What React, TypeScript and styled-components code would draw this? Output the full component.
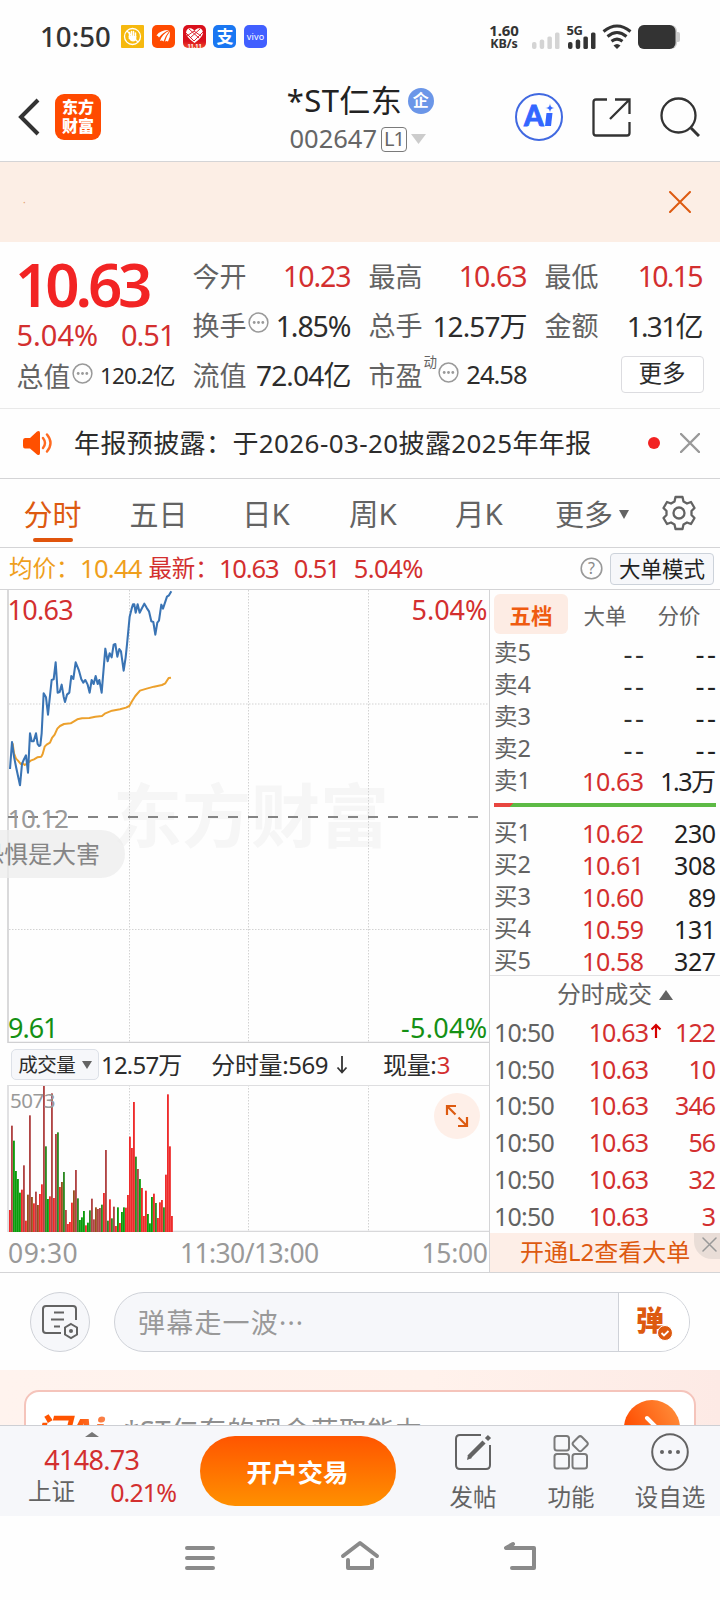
import React from "react";
import styled, { createGlobalStyle } from "styled-components";

const RED = "#d32f2f";
const ORANGE = "#dd5a10";
const GRAY = "#636363";
const LINE = "#d4d4d6";

const Global = createGlobalStyle`
  * { box-sizing: border-box; }
  body { margin: 0; background: #fefefe; }
  body, button, input { font-family: "Noto Sans", "Noto Sans CJK SC", sans-serif; }
`;

const Page = styled.div`
  width: 720px;
  height: 1600px;
  overflow: hidden;
  display: flex;
  flex-direction: column;
  color: #2c2c2c;
  background: #fefefe;
`;

const Text = styled.span<{ $size: number; $color?: string; $ls?: number; $weight?: number; $ml?: number }>`
  font-size: ${(p) => p.$size}px;
  line-height: 1;
  color: ${(p) => p.$color ?? "inherit"};
  letter-spacing: ${(p) => p.$ls ?? 0}px;
  margin-right: ${(p) => -(p.$ls ?? 0)}px;
  margin-left: ${(p) => p.$ml ?? 0}px;
  font-weight: ${(p) => p.$weight ?? 400};
  white-space: nowrap;
`;

/* ---------- status bar ---------- */
const StatusBar = styled.div`
  height: 73px;
  flex: none;
  display: flex;
  align-items: center;
  padding: 0 40px 0 40px;
`;
const AppIcons = styled.div`
  display: flex;
  gap: 7.7px;
  margin-left: 10.5px;
`;
const AppIcon = styled.div<{ $bg: string; $r?: number }>`
  width: 23px;
  height: 23px;
  border-radius: ${(p) => p.$r ?? 5}px;
  background: ${(p) => p.$bg};
  display: flex;
  align-items: center;
  justify-content: center;
  color: #fff;
`;
const StatusRight = styled.div`
  margin-left: auto;
  display: flex;
  align-items: center;
  svg { overflow: visible; }
`;
const Speed = styled.div`
  width: 34px;
  margin-right: 11px;
  font-weight: 700;
  font-size: 15px;
  letter-spacing: -0.1px;
  line-height: 14px;
  text-align: center;
  color: #333;
  white-space: nowrap;
  span { display: block; font-size: 12.5px; letter-spacing: -0.2px; }
`;

/* ---------- header ---------- */
const Header = styled.header`
  height: 89px;
  flex: none;
  display: flex;
  align-items: center;
  justify-content: space-between;
  border-bottom: 1px solid ${LINE};
  padding: 0 19.5px 0 17px;
`;
const HeaderSide = styled.div<{ $gap: number; $end?: boolean }>`
  width: 187px;
  display: flex;
  align-items: center;
  justify-content: ${(p) => (p.$end ? "flex-end" : "flex-start")};
  gap: ${(p) => p.$gap}px;
`;
const Logo = styled.div`
  width: 46px;
  height: 46px;
  border-radius: 9px;
  background: #ff4a00;
  color: #fff;
  font-weight: 900;
  font-size: 16px;
  line-height: 19px;
  display: flex;
  flex-direction: column;
  align-items: center;
  justify-content: center;
`;
const TitleBlock = styled.div`
  display: flex;
  flex-direction: column;
  align-items: center;
  padding: 1px 0 0 3px;
`;
const TitleLine = styled.div<{ $h: number; $gap: number; $pr?: number }>`
  height: ${(p) => p.$h}px;
  padding-right: ${(p) => p.$pr ?? 0}px;
  display: flex;
  align-items: center;
  gap: ${(p) => p.$gap}px;
`;
const CorpBadge = styled.div`
  width: 26px;
  height: 26px;
  border-radius: 50%;
  background: #6b96e8;
  color: #fff;
  font-size: 16px;
  font-weight: 700;
  line-height: 24px;
  text-align: center;
`;
const LevelBadge = styled.div`
  width: 26px;
  height: 25px;
  border: 1.5px solid #7a7a7a;
  border-radius: 4px;
  color: #666;
  font-size: 20px;
  letter-spacing: -1px;
  line-height: 22px;
  text-align: center;
`;

/* ---------- banner ---------- */
const Banner = styled.div`
  height: 80px;
  flex: none;
  background: #fceee5;
  display: flex;
  align-items: center;
  justify-content: space-between;
  padding: 0 29px 0 23px;
`;

/* ---------- quote ---------- */
const Quote = styled.section`
  height: 167px;
  flex: none;
  display: grid;
  grid-template-columns: repeat(4, 159px);
  column-gap: 17px;
  padding: 10px 16px 0 16.5px;
  border-bottom: 1px solid #e9e9e9;
`;
const QuoteCol = styled.div`
  display: flex;
  flex-direction: column;
`;
const QuoteRow = styled.div<{ $h?: number }>`
  height: ${(p) => p.$h ?? 49.3}px;
  display: flex;
  align-items: center;
  justify-content: space-between;
`;
const LabelGroup = styled.span`
  display: flex;
  align-items: center;
`;
const Sup = styled.span`
  font-size: 13.5px;
  line-height: 1;
  color: ${GRAY};
  margin: -24px 0 0 1px;
`;
const MoreButton = styled.button`
  width: 83px;
  height: 37px;
  margin: -1px 0 0 auto;
  padding: 0 0 1px;
  background: #fff;
  border: 1.5px solid #dcdce0;
  border-radius: 4px;
  font-size: 23.5px;
  line-height: 1;
  color: #2c2c2c;
`;

/* ---------- notice ---------- */
const Notice = styled.div`
  height: 70px;
  flex: none;
  display: flex;
  align-items: center;
  padding: 0 20px 2px 21px;
  border-bottom: 1px solid ${LINE};
`;
const NoticeText = styled.div`
  flex: 1;
  padding-left: 21px;
  display: flex;
`;
const RedDot = styled.i`
  width: 12px;
  height: 12px;
  border-radius: 50%;
  background: #f22222;
  margin-right: 20px;
`;

/* ---------- period tabs ---------- */
const Tabs = styled.nav`
  height: 69px;
  flex: none;
  display: grid;
  grid-template-columns: 105px 107px 108px 106px 106px 110px 74px;
  border-bottom: 1px solid ${LINE};
`;
const Tab = styled.div<{ $active?: boolean; $menu?: boolean }>`
  display: flex;
  flex-direction: column;
  align-items: center;
  padding: 20px 0 0 ${(p) => (p.$menu ? 10 : 0)}px;
  gap: 9px;
  color: ${(p) => (p.$active ? ORANGE : GRAY)};
  &::after {
    content: "";
    width: 40px;
    height: 4px;
    border-radius: 2px;
    background: ${(p) => (p.$active ? "#e0540c" : "transparent")};
  }
`;
const TabLabel = styled.div`
  height: 30px;
  display: flex;
  align-items: center;
  gap: 6px;
`;

/* ---------- average price row ---------- */
const AvgRow = styled.div`
  height: 42px;
  flex: none;
  display: flex;
  align-items: center;
  padding: 0 6px 0 9px;
  border-bottom: 1px solid ${LINE};
`;
const ModeButton = styled.button`
  width: 104px;
  height: 32px;
  margin-left: 7px;
  padding: 0;
  border: 1px solid #ccd2da;
  border-radius: 4px;
  background: #f6f7fa;
  font-size: 21.5px;
  line-height: 1;
  color: #222;
`;
const Spring = styled.span`
  flex: 1;
`;

/* ---------- main ---------- */
const Main = styled.main`
  height: 683px;
  flex: none;
  display: flex;
  border-bottom: 1px solid ${LINE};
`;
const ChartCol = styled.div`
  width: 490px;
  border-right: 1px solid ${LINE};
  display: flex;
  flex-direction: column;
`;
const ChartBox = styled.div<{ $h: number }>`
  position: relative;
  height: ${(p) => p.$h}px;
  flex: none;
  svg { display: block; }
`;
const FloatComment = styled.div`
  position: absolute;
  left: 0;
  top: 240px;
  width: 125px;
  height: 48px;
  border-radius: 0 24px 24px 0;
  background: rgba(236, 236, 236, 0.75);
  overflow: hidden;
  display: flex;
  align-items: center;
  justify-content: flex-end;
  padding-right: 25px;
`;
const ExpandButton = styled.div`
  position: absolute;
  right: 9px;
  top: 8px;
  width: 46px;
  height: 46px;
  border-radius: 50%;
  background: #feefe8;
  display: flex;
  align-items: center;
  justify-content: center;
`;
const InfoRow = styled.div`
  height: 42px;
  flex: none;
  display: flex;
  align-items: center;
  padding: 1px 0 0 11px;
`;
const Selector = styled.div`
  width: 88px;
  height: 31px;
  border: 1px solid #dde1e8;
  border-radius: 5px;
  background: #f6f7fa;
  display: flex;
  align-items: center;
  justify-content: center;
  gap: 6px;
`;
const Axis = styled.div`
  flex: 1;
  display: flex;
  align-items: center;
  justify-content: space-between;
  padding: 3px 1px 0 8px;
`;

/* ---------- order book ---------- */
const Book = styled.aside`
  flex: 1;
  display: flex;
  flex-direction: column;
`;
const BookTabs = styled.div`
  height: 47px;
  flex: none;
  padding: 4px 4px 3px 4px;
  display: grid;
  grid-template-columns: 74px 74px 74px;
`;
const BookTab = styled.div<{ $active?: boolean }>`
  border-radius: 6px;
  background: ${(p) => (p.$active ? "#fdece4" : "transparent")};
  color: ${(p) => (p.$active ? "#ef5b10" : GRAY)};
  font-weight: ${(p) => (p.$active ? 700 : 400)};
  font-size: 21.5px;
  display: flex;
  align-items: center;
  justify-content: center;
`;
const BookRow = styled.div<{ $h: number }>`
  height: ${(p) => p.$h}px;
  flex: none;
  display: grid;
  grid-template-columns: 60px 90px 1fr;
  align-items: center;
  padding: 0 4px 0 4px;
  & > :nth-child(n + 2) { text-align: right; }
`;
const RatioBar = styled.div`
  height: 4px;
  flex: none;
  margin: 6px 4px 10px;
  background: linear-gradient(135deg, #e8453f 0 14px, #5dba45 14px);
`;
const TradeTitle = styled.div`
  height: 39px;
  flex: none;
  margin-top: -2px;
  border-top: 1px solid #e2e2e4;
  display: flex;
  align-items: center;
  justify-content: center;
  gap: 7px;
  padding: 0 0 0 20px;
`;
const TradePrice = styled.span`
  display: flex;
  justify-content: flex-end;
  align-items: center;
`;
const TradeRow = styled.div`
  height: 36.8px;
  flex: none;
  display: grid;
  grid-template-columns: 60px 109px 1fr;
  align-items: center;
  padding: 0 4px 0 4px;
  & > :nth-child(3) { text-align: right; }
`;
const ArrowSlot = styled.span`
  width: 13px;
  height: 18px;
  margin-left: 1px;
`;
const Promo = styled.div`
  height: 39px;
  margin-top: -2px;
  flex: none;
  background: #fdeee7;
  display: flex;
  justify-content: space-between;
  padding-left: 30px;
  align-items: center;
`;
const PromoClose = styled.div`
  align-self: flex-start;
  width: 26px;
  height: 26px;
  background: #e9ddd7;
  border-bottom-left-radius: 18px;
  padding: 4px 0 0 8px;
  svg { display: block; }
`;

/* ---------- comment bar ---------- */
const CommentBar = styled.div`
  height: 97px;
  flex: none;
  display: flex;
  align-items: flex-start;
  gap: 24px;
  padding: 19px 30px 0;
`;
const CommentSettings = styled.div`
  width: 60px;
  height: 60px;
  border-radius: 50%;
  border: 1px solid #cfd2d8;
  background: #f6f7fa;
  display: flex;
  align-items: center;
  justify-content: center;
`;
const CommentInput = styled.div`
  flex: 1;
  height: 60px;
  border: 1px solid #cfd2d8;
  border-radius: 30px;
  overflow: hidden;
  display: flex;
  background: #f6f7fa;
`;
const Placeholder = styled.div`
  flex: 1;
  display: flex;
  align-items: center;
  padding-left: 23px;
`;
const DanmuToggle = styled.div`
  position: relative;
  width: 71px;
  border-left: 1px solid #cfd2d8;
  background: #fff;
  padding: 13px 0 0 17px;
  svg { position: absolute; left: 38px; top: 32px; }
`;

/* ---------- AI card ---------- */
const AiSection = styled.div`
  height: 55px;
  flex: none;
  overflow: hidden;
  background: linear-gradient(90deg, #fff3ee, #fff2ec 60%, #fdeae5);
  padding: 20px 24px 0;
`;
const AiCard = styled.div`
  height: 76px;
  border: 2px solid #f5c4bb;
  border-radius: 15px;
  background: #fff;
  display: flex;
  align-items: flex-start;
  padding: 8px 14px 0 9px;
`;
const AiWord = styled.div`
  width: 89px;
  padding-top: 13px;
  font-size: 35px;
  line-height: 36px;
  font-weight: 900;
  font-style: italic;
  letter-spacing: -0.5px;
  background: linear-gradient(90deg, #ff5400 45%, #f7a07c);
  -webkit-background-clip: text;
  color: transparent;
`;
const AiQuestion = styled.div`
  flex: 1;
  padding-top: 17px;
`;
const AiGo = styled.div`
  width: 56px;
  height: 56px;
  border-radius: 50%;
  background: linear-gradient(60deg, #ff4c00 20%, #ff9440);
  display: flex;
  align-items: center;
  justify-content: center;
`;

/* ---------- bottom bar ---------- */
const BottomBar = styled.footer`
  height: 91px;
  flex: none;
  border-top: 1.5px solid #cdcfd4;
  background: #f6f7fa;
  display: flex;
  align-items: flex-start;
`;
const IndexBox = styled.div`
  width: 200px;
  display: flex;
  flex-direction: column;
  padding: 6px 23px 0 28px;
`;
const IndexTop = styled.div`
  display: flex;
  flex-direction: column;
  align-items: center;
  padding-right: 21px;
  gap: 9px;
`;
const IndexLine = styled.div`
  display: flex;
  justify-content: space-between;
  margin-top: 7px;
`;
const OpenButton = styled.button`
  width: 196px;
  height: 70px;
  margin: 10px 31px 0 0;
  border: 0;
  border-radius: 35px;
  padding: 0 1px 2px 0;
  background: linear-gradient(#ff5500, #ff9000);
  color: #fff;
  font-size: 25.5px;
  font-weight: 700;
`;
const Action = styled.div<{ $w: number }>`
  width: ${(p) => p.$w}px;
  padding-top: 7px;
  display: flex;
  flex-direction: column;
  align-items: center;
  gap: 15px;
`;
const NavBar = styled.div`
  flex: 1;
  display: flex;
  justify-content: center;
  padding-top: 22px;
  gap: 120px;
`;

const Triangle = ({ w, h, color, up }: { w: number; h: number; color: string; up?: boolean }) => (
  <svg width={w} height={h} viewBox="0 0 10 10" preserveAspectRatio="none">
    <path d={up ? "M5 0 10 10H0z" : "M0 0H10L5 10z"} fill={color} />
  </svg>
);
const Cross = ({ size, color, sw }: { size: number; color: string; sw: number }) => (
  <svg width={size} height={size} viewBox={`0 0 ${size} ${size}`} stroke={color} strokeWidth={sw} strokeLinecap="round">
    <path d={`M1 1 ${size - 1} ${size - 1}M${size - 1} 1 1 ${size - 1}`} />
  </svg>
);
const DotsSvg = styled.svg`
  margin: -6px 0 0 1px;
`;
const MoreDots = () => (
  <DotsSvg width="21" height="21" viewBox="0 0 21 21">
    <circle cx="10.5" cy="10.5" r="9.4" fill="none" stroke="#999" strokeWidth="1.5" />
    {[6.2, 10.5, 14.8].map((x) => <circle key={x} cx={x} cy="10.5" r="1.4" fill="#999" />)}
  </DotsSvg>
);
const SignalSvg = styled.svg<{ $mr?: number }>`
  margin-right: ${(p) => p.$mr ?? 0}px;
`;
const Signal = ({ color, top, mr }: { color: string; top?: string; mr: number }) => (
  <SignalSvg $mr={mr} width="28" height="26" viewBox="0 0 28 26" fill={color}>
    <rect x="0" y="18" width="4.5" height="7" rx="2" />
    <rect x="7.7" y="15.5" width="4.5" height="9.5" rx="2" />
    <rect x="15.4" y="12.5" width="4.5" height="12.5" rx="1.5" />
    <rect x="23" y="8.5" width="4.5" height="16.5" rx="1.5" />
    {top && <text x="-1.5" y="11" fontSize="13" fontWeight="700" letterSpacing="-0.5">{top}</text>}
  </SignalSvg>
);

const PRICE_LINE =
  "30,567 36,486 42,530 49,565 60,616 66,552 71,540 78,526 84,578 90,460 95,484 101,484 108,460 113,492 117,498 121,496 125,460 131,340 138,352 144,404 155,300 161,298 167,247 173,338 179,336 185,314 191,350 195,366 201,344 208,338 214,288 220,297 227,247 237,272 244,298 250,308 256,300 263,314 269,338 275,300 281,312 287,288 293,312 298,300 305,338 316,206 323,244 329,220 335,232 341,194 346,192 352,230 358,207 363,214 371,272 377,232 381,194 389,110 395,86 399,73 403,73 407,98 413,73 419,98 425,86 433,71 441,85 447,94 454,124 460,126 466,164 472,128 477,122 484,74 489,86 495,68 501,50 507,46 514,34";
const AVG_LINE =
  "38,490 42,520 48,536 54,542 62,552 68,550 74,555 82,550 92,542 102,538 112,532 124,530 128,522 134,500 140,494 150,488 156,474 164,464 172,446 180,438 192,432 212,430 222,424 232,418 246,415 268,414 286,410 306,408 316,400 336,392 360,388 378,383 388,378 396,364 406,348 420,332 440,326 462,320 486,315 496,310 506,294 513,293";

const VOLUME =
  "510r 257d 302g 393g 417g 458g 449r 376d 542r 464b 226d 471b 490r 455d 495b 462r 433r 138d 319h 477g 469r 160d 474r 282d 277h 441r 426b 396h 510d 552r 546r 488r 451b 390d 475h 540g 532g 513g 556r 548g 511h 476d 538d 502b 507d 504d 494h 459r 330d 542h 478r 535h 500d 558r 502g 549r 516g 502g 503r 465r 290r 324r 186r 350h 387d 417g 444r 528r 452r 522g 550g 471g 461r 489h 534r 487r 480r 502h 404r 163r 319r 528r"
    .split(" ")
    .map((v) => ({ top: parseInt(v, 10), tone: v[v.length - 1] }));
const TONES: Record<string, string> = { r: "#ee2b2b", g: "#0b9c0b", d: "#b04444", h: "#2d8a22", b: "#96501c" };

const PriceChart = () => (
  <svg width="489" height="453" viewBox="0 0 489 453">
    <text x="113" y="252" fontSize="69" fontWeight="700" fill="#f6f6f6">东方财富</text>
    <g stroke="#d2d2d2" strokeDasharray="1.5 1.5">
      <path d="M129.5 0V452M248.5 0V452M368.5 0V452" />
      <path d="M9 114H488M9 339.500H488" />
    </g>
    <path d="M8 0V452.500H489" fill="none" stroke="#d0d0d2" strokeWidth="1.6" />
    <path d="M8 227H482" stroke="#848484" strokeWidth="1.8" strokeDasharray="10 10" />
    <g transform="translate(0 -10) scale(.3333)" fill="none" strokeLinejoin="round">
      <polyline points={AVG_LINE} stroke="#eca02c" strokeWidth="6" />
      <polyline points={PRICE_LINE} stroke="#3a74b4" strokeWidth="6.2" />
    </g>
    <g fontSize="27" letterSpacing="-0.7">
      <text x="7.500" y="29.500" fill={RED}>10.63</text>
      <text x="487.500" y="29.500" textAnchor="end" letterSpacing="0" fill={RED}>5.04%</text>
      <text x="7.500" y="238" fontSize="26" fill="#999" letterSpacing="-1.3">10.12</text>
      <text x="8" y="447.500" letterSpacing="-1" fill="#149014">9.61</text>
      <text x="487.500" y="447.500" textAnchor="end" letterSpacing="0.3" fill="#149014">-5.04%</text>
    </g>
  </svg>
);

const VolumeChart = () => (
  <svg width="489" height="147" viewBox="0 0 489 147">
    <path d="M129.500 0V146M248.500 0V146M368.500 0V146" stroke="#d2d2d2" strokeDasharray="1.5 1.5" />
    <path d="M8 0V146.500H489" fill="none" stroke="#d8d8da" strokeWidth="1.5" />
    <path d="M8 .5H489" stroke="#dedee0" />
    {VOLUME.map((v, i) => (
      <rect key={i} x={9 + i * 2} y={(v.top - 135) / 3} width="1.85" height={(576 - v.top) / 3} fill={TONES[v.tone]} />
    ))}
    <text x="10" y="23" fontSize="20.5" letterSpacing="-0.500" fill="#999">5073</text>
  </svg>
);

const asks = [["卖5", "--", "--"], ["卖4", "--", "--"], ["卖3", "--", "--"], ["卖2", "--", "--"], ["卖1", "10.63", "1.3万"]];
const bids = [["买1", "10.62", "230"], ["买2", "10.61", "308"], ["买3", "10.60", "89"], ["买4", "10.59", "131"], ["买5", "10.58", "327"]];
const trades = ["122", "10", "346", "56", "32", "3"];

const Level = ({ row }: { row: string[] }) => (
  <BookRow $h={32}>
    <Text $size={23.5} $color={GRAY}>{row[0]}</Text>
    <Text $size={row[1] === "--" ? 28 : 25} $color={row[1] === "--" ? "#333" : RED} $ls={row[1] === "--" ? 2.5 : -0.5}>{row[1]}</Text>
    <Text $size={row[2] === "--" ? 28 : 25} $color="#222" $ls={row[2] === "--" ? 2.5 : row[2] === "1.3万" ? -1.5 : -0.5}>{row[2]}</Text>
  </BookRow>
);

const Item = ({ label, value, red, ls = -1, size = 28.5, extra }: { label: string; value: string; red?: boolean; ls?: number; size?: number; extra?: React.ReactNode }) => (
  <QuoteRow>
    <LabelGroup>
      <Text $size={27} $color={GRAY}>{label}</Text>
      {extra}
    </LabelGroup>
    <Text $size={size} $color={red ? RED : "#2c2c2c"} $ls={ls}>{value}</Text>
  </QuoteRow>
);

const WifiSvg = styled.svg`
  margin: 0 6px;
`;
const GearSvg = styled.svg`
  margin-top: -4px;
`;
const DownArrow = styled.svg`
  margin-left: 7px;
`;

export default function App() {
  return (
    <Page>
      <Global />
      <StatusBar>
        <Text $size={27.5} $weight={500} $color="#333" $ls={0.1}>10:50</Text>
        <AppIcons>
          <AppIcon $bg="#f6b90f" $r={1}>
            <svg width="19" height="19" viewBox="0 0 19 19" fill="none" stroke="#fff" strokeWidth="1.3">
              <circle cx="9.500" cy="9.500" r="8" />
              <path d="M6.500 10V5.500M8.500 9V4.500M10.500 9V4.500M12.500 10V6" strokeWidth="1.500" strokeLinecap="round" />
              <path d="M5.700 9h7.600v2.500q0 3-3.300 3-2.500 0-4.300-3z" fill="#fff" stroke="none" />
              <path d="m4 4 11 11" />
            </svg>
          </AppIcon>
          <AppIcon $bg="#ff4a00">
            <svg width="17" height="17" viewBox="0 0 17 17" fill="#fff">
              <path d="M1.500 7.500Q5 2 14 2 7.500 4.500 4 9.500 3 7.500 1.500 7.500z" />
              <path d="M5 13Q7 6 14.500 2.800 10.500 7.500 8.500 13.500 7 12 5 13z" />
              <path d="M10 13.500Q11.500 7.500 15 3.500q.5 5-2 10-1.500-1-3 0z" />
            </svg>
          </AppIcon>
          <AppIcon $bg="linear-gradient(#d9101c 70%, #f04a2a)">
            <svg width="21" height="22" viewBox="0 0 21 22">
              <path d="M10.500 17Q2 11 2 6.500 3 1.500 7.500 2.500 9.500 3 10.500 5 11.500 3 13.500 2.500 18 1.500 19 6.500 19 11 10.500 17z" fill="#fff" />
              <path d="m2 7 8 8M5 3l10 9M10 5l7 5M19 6l-9 9M16 3 6 12M10 5 3 10" stroke="#d9101c" strokeWidth=".9" />
              <text x="10.500" y="21.500" fontSize="5.500" fontWeight="700" fill="#fff" textAnchor="middle">11.11</text>
            </svg>
          </AppIcon>
          <AppIcon $bg="#1a77f2"><Text $size={17} $weight={700}>支</Text></AppIcon>
          <AppIcon $bg="#415fff"><Text $size={9} $ls={0.2}>vivo</Text></AppIcon>
        </AppIcons>
        <StatusRight>
          <Speed>1.60<span>KB/s</span></Speed>
          <Signal color="#d4d4d4" mr={8} />
          <Signal color="#333" top="5G" mr={0} />
          <WifiSvg width="30" height="26" viewBox="0 0 30 26" fill="none" stroke="#333" strokeWidth="3">
            <path d="M1.500 7.500Q15-3.500 28.500 7.500M5.500 12.500Q15 4.500 24.500 12.500M9.500 17.300Q15 13 20.500 17.300" />
            <path d="M11.500 21.500q3.500-3 7 0L15 25z" fill="#333" stroke="none" />
          </WifiSvg>
          <svg width="42" height="24" viewBox="0 0 42 24">
            <rect x="36" y="7" width="6" height="10" rx="2" fill="#ccc" />
            <rect width="39" height="24" rx="6" fill="#ccc" />
            <rect width="37.500" height="24" rx="6" fill="#333" />
          </svg>
        </StatusRight>
      </StatusBar>

      <Header>
        <HeaderSide $gap={15}>
          <svg width="23" height="38" viewBox="0 0 23 38" fill="none" stroke="#333" strokeWidth="4">
            <path d="M21 2 4 19l17 17" />
          </svg>
          <Logo><span>东方</span><span>财富</span></Logo>
        </HeaderSide>
        <TitleBlock>
          <TitleLine $h={43} $gap={6}>
            <Text $size={31} $color="#222" $ls={0.4}>*ST仁东</Text>
            <CorpBadge>企</CorpBadge>
          </TitleLine>
          <TitleLine $h={34} $gap={4} $pr={5}>
            <Text $size={25.5} $color="#666" $ls={0}>002647</Text>
            <LevelBadge>L1</LevelBadge>
            <Triangle w={15} h={10} color="#ccc" />
          </TitleLine>
        </TitleBlock>
        <HeaderSide $gap={29} $end>
          <svg width="48" height="48" viewBox="0 0 48 48">
            <circle cx="24" cy="24" r="23" fill="none" stroke="#4169e1" strokeWidth="2" />
            <text x="9" y="33" fontSize="28" fontWeight="900" fontFamily="Lato" fill="#3366ff" stroke="#3366ff" strokeWidth=".8">A</text>
            <path d="M31.500 20h6l-1.500 13h-6z" fill="#3366ff" />
            <path d="m35 10.500 1.300 3.200 3.200 1.300-3.200 1.300L35 19.500l-1.300-3.200-3.200-1.300 3.200-1.300z" fill="#3366ff" stroke="#fff" strokeWidth=".6" />
          </svg>
          <svg width="39" height="39" viewBox="0 0 39 39" fill="none" stroke="#333" strokeWidth="2.300">
            <path d="M15 1.500H4Q1.500 1.500 1.500 4V35q0 2.500 2.500 2.500H35q2.500 0 2.500-2.500V24M23 1.500H37.500V16M37 2 18 21" />
          </svg>
          <svg width="40" height="40" viewBox="0 0 40 40" fill="none" stroke="#333" strokeWidth="2.300">
            <circle cx="18.500" cy="18.500" r="17" />
            <path d="m31 31 8 8" strokeWidth="3" />
          </svg>
        </HeaderSide>
      </Header>

      <Banner>
        <Text $size={10} $color="#e2a070">·</Text>
        <Cross size={22} color={ORANGE} sw={2} />
      </Banner>

      <Quote>
        <QuoteCol>
          <QuoteRow $h={64}><Text $size={60} $weight={600} $color="#f22424" $ls={-4.1} $ml={-1.5}>10.63</Text></QuoteRow>
          <QuoteRow $h={36}>
            <Text $size={29} $color={RED} $ls={0}>5.04%</Text>
            <Text $size={29} $color={RED} $ls={-1}>0.51</Text>
          </QuoteRow>
          <Item label="总值" value="120.2亿" size={22.5} ls={-0.9} extra={<MoreDots />} />
        </QuoteCol>
        <QuoteCol>
          <Item label="今开" value="10.23" red ls={-1.1} />
          <Item label="换手" value="1.85%" ls={-1.1} extra={<MoreDots />} />
          <Item label="流值" value="72.04亿" ls={-0.8} size={28} />
        </QuoteCol>
        <QuoteCol>
          <Item label="最高" value="10.63" red />
          <Item label="总手" value="12.57万" ls={-0.9} size={28} />
          <QuoteRow>
            <LabelGroup>
              <Text $size={27} $color={GRAY}>市盈</Text>
              <Sup>动</Sup>
              <MoreDots />
            </LabelGroup>
            <Text $size={25.5} $ls={-1}>24.58</Text>
          </QuoteRow>
        </QuoteCol>
        <QuoteCol>
          <Item label="最低" value="10.15" red ls={-1.8} />
          <Item label="金额" value="1.31亿" ls={-1.7} size={28} />
          <QuoteRow><MoreButton>更多</MoreButton></QuoteRow>
        </QuoteCol>
      </Quote>

      <Notice>
        <svg width="32" height="26" viewBox="0 0 32 26">
          <path d="M4 8H9L16 1.500Q19 0 19 3V23q0 3-3 1.500L9 18.500H4q-2 0-2-2.500V10.500Q2 8 4 8z" fill="#ff5000" />
          <path d="M22 8q4 5 0 10M26 4.500q7 8.500 0 17" fill="none" stroke="#ff6a20" strokeWidth="2.400" strokeLinecap="round" />
        </svg>
        <NoticeText><Text $size={26} $ls={0.4}>年报预披露：于2026-03-20披露2025年年报</Text></NoticeText>
        <RedDot />
        <Cross size={20} color="#999" sw={2.4} />
      </Notice>

      <Tabs>
        <Tab $active><TabLabel><Text $size={29}>分时</Text></TabLabel></Tab>
        <Tab><TabLabel><Text $size={29}>五日</Text></TabLabel></Tab>
        <Tab><TabLabel><Text $size={29.5}>日K</Text></TabLabel></Tab>
        <Tab><TabLabel><Text $size={29.5}>周K</Text></TabLabel></Tab>
        <Tab><TabLabel><Text $size={29.5}>月K</Text></TabLabel></Tab>
        <Tab $menu><TabLabel><Text $size={29}>更多</Text><Triangle w={10} h={9} color={GRAY} /></TabLabel></Tab>
        <Tab>
          <GearSvg width="36" height="36" viewBox="0 0 36 36" fill="none" stroke={GRAY} strokeWidth="2.300" strokeLinejoin="round">
            <path d="M14.500 2h7l1 4.500 3.500 2 4-1.500 3.500 6-3 3v4l3 3-3.500 6-4-1.500-3.500 2-1 4.500h-7l-1-4.500-3.500-2-4 1.500-3.500-6 3-3v-4l-3-3 3.500-6 4 1.500 3.500-2z" />
            <circle cx="18" cy="18" r="5.500" />
          </GearSvg>
        </Tab>
      </Tabs>

      <AvgRow>
        <Text $size={23.5} $color="#ef9f1c">均价：</Text>
        <Text $size={25.5} $color="#ef9f1c" $ls={-0.7} $ml={0.5}>10.44</Text>
        <Text $size={23.5} $color={RED} $ml={6}>最新：</Text>
        <Text $size={25.5} $color={RED} $ls={-1.1}>10.63</Text>
        <Text $size={25.5} $color={RED} $ls={-1.2} $ml={14}>0.51</Text>
        <Text $size={25.5} $color={RED} $ls={-0.5} $ml={13}>5.04%</Text>
        <Spring />
        <svg width="23" height="23" viewBox="0 0 23 23">
          <circle cx="11.500" cy="11.500" r="10.300" fill="none" stroke="#999" strokeWidth="1.600" />
          <text x="11.500" y="17" fontSize="16" textAnchor="middle" fill="#888">?</text>
        </svg>
        <ModeButton>大单模式</ModeButton>
      </AvgRow>

      <Main>
        <ChartCol>
          <ChartBox $h={453}>
            <PriceChart />
            <FloatComment><Text $size={24} $color="#858585">恐惧是大害</Text></FloatComment>
          </ChartBox>
          <InfoRow>
            <Selector><Text $size={19.5} $ls={-0.5}>成交量</Text><Triangle w={10} h={8} color={GRAY} /></Selector>
            <Text $size={24} $ls={-0.8} $ml={2}>12.57万</Text>
            <Text $size={24} $ls={-0.4} $ml={29}>分时量:569</Text>
            <DownArrow width="12" height="18" viewBox="0 0 12 18" fill="none" stroke="#333" strokeWidth="1.800">
              <path d="M6 0V16M1.500 11.500 6 16.500l4.500-5" />
            </DownArrow>
            <Text $size={24} $ls={-0.4} $ml={35.5}>现量:</Text>
            <Text $size={24} $color={RED}>3</Text>
          </InfoRow>
          <ChartBox $h={147}>
            <VolumeChart />
            <ExpandButton>
              <svg width="24" height="24" viewBox="0 0 24 24" fill="none" stroke={ORANGE} strokeWidth="2.200">
                <path d="M2 11V2h9M2.500 2.500l8 8M13 22h9v-9M21.500 21.500l-8-8" />
              </svg>
            </ExpandButton>
          </ChartBox>
          <Axis>
            <Text $size={26.5} $color="#999" $ls={0.5}>09:30</Text>
            <Text $size={26.5} $color="#999" $ls={-0.6}>11:30/13:00</Text>
            <Text $size={26.5} $color="#999" $ls={-0.3}>15:00</Text>
          </Axis>
        </ChartCol>

        <Book>
          <BookTabs>
            <BookTab $active>五档</BookTab>
            <BookTab>大单</BookTab>
            <BookTab>分价</BookTab>
          </BookTabs>
          {asks.map((r) => <Level key={r[0]} row={r} />)}
          <RatioBar />
          {bids.map((r) => <Level key={r[0]} row={r} />)}
          <TradeTitle>
            <Text $size={23.8} $color={GRAY}>分时成交</Text>
            <Triangle w={14} h={10} color={GRAY} up />
          </TradeTitle>
          {trades.map((v, i) => (
            <TradeRow key={v}>
              <Text $size={25} $color={GRAY} $ls={-0.8}>10:50</Text>
              <TradePrice>
                <Text $size={25} $color={RED} $ls={-0.9}>10.63</Text>
                <ArrowSlot>
                  {i === 0 && (
                    <svg width="12" height="16" viewBox="0 0 12 16" fill="none" stroke="#d50000" strokeWidth="2.200" display="block">
                      <path d="M6 15V2M1.500 6.500 6 2l4.500 4.500" />
                    </svg>
                  )}
                </ArrowSlot>
              </TradePrice>
              <Text $size={25} $color={RED} $ls={-1}>{v}</Text>
            </TradeRow>
          ))}
          <Promo>
            <Text $size={24} $color={ORANGE}>开通L2查看大单</Text>
            <PromoClose><Cross size={15} color="#999" sw={1.5} /></PromoClose>
          </Promo>
        </Book>
      </Main>

      <CommentBar>
        <CommentSettings>
          <svg width="38" height="36" viewBox="0 0 38 36" fill="none" stroke={GRAY} strokeWidth="2">
            <path d="M20 29H5q-3 0-3-3V5q0-3 3-3H32q3 0 3 3V16" />
            <path d="M13 8.500H23M10 15.500H23M13 22.500h6" />
            <path d="m30 20 6 3.500v7L30 34l-6-3.500v-7z" />
            <circle cx="30" cy="27" r="2" fill={GRAY} stroke="none" />
          </svg>
        </CommentSettings>
        <CommentInput>
          <Placeholder><Text $size={27} $color="#999" $ls={1.2}>弹幕走一波···</Text></Placeholder>
          <DanmuToggle>
            <Text $size={28} $weight={900} $color={ORANGE}>弹</Text>
            <svg width="16" height="16" viewBox="0 0 16 16">
              <circle cx="8" cy="8" r="7.500" fill={ORANGE} stroke="#fff" />
              <path d="m4.500 8 2.500 2.500 4.500-4.500" fill="none" stroke="#fff" strokeWidth="1.800" />
            </svg>
          </DanmuToggle>
        </CommentInput>
      </CommentBar>

      <AiSection>
        <AiCard>
          <AiWord>问Ai</AiWord>
          <AiQuestion><Text $size={27.5} $color="#8f8f8f" $ls={0.5}>*ST仁东的现金获取能力</Text></AiQuestion>
          <AiGo>
            <svg width="18" height="26" viewBox="0 0 18 26" fill="none" stroke="#fff" strokeWidth="4" strokeLinecap="round">
              <path d="m4 3 10 10L4 23" />
            </svg>
          </AiGo>
        </AiCard>
      </AiSection>

      <BottomBar>
        <IndexBox>
          <IndexTop>
            <Triangle w={14} h={5} color="#777" up />
            <Text $size={27} $color={RED} $ls={-0.7}>4148.73</Text>
          </IndexTop>
          <IndexLine>
            <Text $size={23.5} $color={GRAY}>上证</Text>
            <Text $size={25} $color={RED} $ls={-0.9}>0.21%</Text>
          </IndexLine>
        </IndexBox>
        <OpenButton>开户交易</OpenButton>
        <Action $w={92}>
          <svg width="38" height="38" viewBox="0 0 38 38" fill="none" stroke={GRAY} strokeWidth="2">
            <path d="M27 2H6Q2 2 2 6V32q0 4 4 4H32q4 0 4-4V12" />
            <path d="M15 24 30 9" strokeWidth="4.500" />
            <path d="M32.500 6.500 35.500 3.500" strokeWidth="4.500" />
            <path d="m13 27 1-5 4 3z" fill={GRAY} stroke="none" />
          </svg>
          <Text $size={23.5} $color={GRAY}>发帖</Text>
        </Action>
        <Action $w={104}>
          <svg width="38" height="38" viewBox="0 0 38 38" fill="none" stroke="#7a7a7a" strokeWidth="2">
            <rect x="2.500" y="3" width="14.500" height="14.500" rx="2.500" />
            <rect x="2.500" y="21" width="14.500" height="14.500" rx="2.500" />
            <rect x="20.500" y="21" width="14.500" height="14.500" rx="2.500" />
            <rect x="22.200" y="4.700" width="12" height="12" rx="2.500" transform="rotate(45 28.200 10.700)" />
          </svg>
          <Text $size={23.5} $color={GRAY}>功能</Text>
        </Action>
        <Action $w={94}>
          <svg width="38" height="38" viewBox="0 0 38 38">
            <circle cx="19" cy="19" r="17.800" fill="none" stroke={GRAY} strokeWidth="2" />
            {[11, 19, 27].map((x) => <circle key={x} cx={x} cy="19" r="2" fill={GRAY} />)}
          </svg>
          <Text $size={23.5} $color={GRAY}>设自选</Text>
        </Action>
      </BottomBar>

      <NavBar>
        <svg width="40" height="36" viewBox="0 0 40 36" stroke="#8a8a8a" strokeWidth="4" strokeLinecap="round">
          <path d="M7 10H33M7 20H33M7 30H33" />
        </svg>
        <svg width="40" height="36" viewBox="0 0 40 36" fill="none" stroke="#8a8a8a" strokeWidth="4" strokeLinecap="round" strokeLinejoin="round">
          <path d="M3 18 20 5 37 18M8 22v8H32V22" />
        </svg>
        <svg width="40" height="36" viewBox="0 0 40 36" fill="none" stroke="#8a8a8a" strokeWidth="4" strokeLinecap="round" strokeLinejoin="round">
          <path d="M13 6 6 10H34V30H12" />
        </svg>
      </NavBar>
    </Page>
  );
}
